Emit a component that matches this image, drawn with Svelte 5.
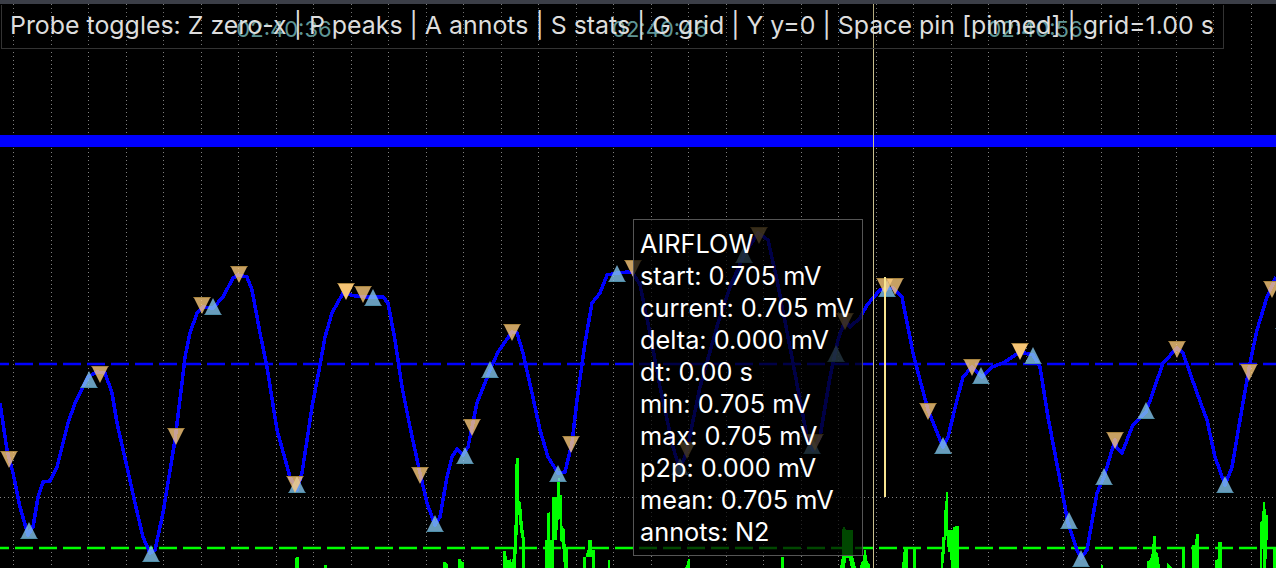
<script>
  const gridX = Array.from({ length: 34 }, (_, i) => Math.round(13 + 37.5 * i) + 0.5);

  const trace = [[0,403],[7,450],[13,473],[20,507],[28,535],[33,527],[38,497],[43,482],[50,481],[57,467],[62,447],[68,423],[75,403],[88,377],[97,372],[105,373],[112,393],[117,423],[127,467],[135,503],[143,537],[150,553],[155,550],[163,513],[175,440],[182,383],[185,357],[190,333],[197,313],[203,307],[213,308],[223,297],[233,278],[238,275],[247,277],[252,290],[260,333],[267,367],[277,430],[290,477],[297,490],[302,473],[312,407],[320,365],[325,337],[332,313],[343,293],[355,296],[367,297],[383,297],[388,303],[395,340],[402,387],[410,427],[420,473],[427,503],[435,525],[440,517],[447,477],[452,457],[457,449],[463,455],[468,447],[477,403],[490,370],[498,352],[512,332],[517,333],[523,353],[532,393],[540,430],[548,457],[558,473],[565,472],[572,443],[577,400],[585,343],[592,303],[600,293],[607,275],[617,273],[628,272],[633,273],[640,285],[650,333],[660,387],[673,447],[680,470],[687,450],[700,387],[718,323],[730,287],[745,253],[758,233],[768,240],[777,280],[793,363],[807,437],[813,450],[820,437],[830,377],[838,340],[845,320],[850,327],[860,318],[867,305],[880,290],[893,288],[902,297],[913,353],[920,380],[928,410],[943,447],[948,437],[957,400],[963,377],[972,367],[982,377],[992,367],[1003,363],[1020,352],[1033,355],[1040,367],[1048,417],[1060,480],[1068,523],[1077,550],[1081,558],[1087,550],[1097,493],[1104,477],[1115,440],[1117,448],[1122,453],[1127,440],[1133,425],[1146,412],[1153,392],[1163,363],[1177,348],[1183,353],[1197,393],[1207,420],[1215,457],[1225,485],[1232,467],[1240,420],[1250,363],[1257,330],[1267,297],[1276,277]];

  const green = [
    [[295,568],[295,560],[296,557],[299,557],[299,568]],
    [[324,568],[324,565],[327,565],[327,568]],
    [[443,568],[443,562],[445,562],[448,565],[448,568]],
    [[458,568],[458,559],[461,559],[462,562],[464,562],[464,568]],
    [[503,568],[503,551],[506,551],[507,560],[509,560],[511,559],[511,563],[513,558],[514,537],[515,513],[515,470],[516,458],[519,458],[519,500],[521,503],[523,527],[525,540],[525,568],[522,568],[522,540],[520,530],[518,510],[518,530],[517,540],[516,568]],
    [[545,568],[545,540],[547,540],[547,513],[550,512],[550,540],[552,540],[552,497],[557,497],[557,487],[558,478],[560,478],[560,495],[562,495],[562,525],[565,530],[565,543],[568,550],[568,568],[564,568],[562,543],[560,540],[560,518],[558,520],[557,540],[554,540],[554,568]],
    [[583,568],[583,557],[586,557],[587,550],[588,549],[588,540],[592,540],[592,550],[595,550],[595,568],[592,568],[592,557],[586,557],[586,568]],
    [[608,568],[608,560],[610,560],[610,568]],
    [[685,568],[687,564],[688,559],[690,559],[690,568]],
    [[781,568],[781,557],[784,557],[784,568]],
    [[840,568],[842,556],[842,530],[844,526],[846,530],[853,530],[853,556],[856,568],[851,568],[849,558],[846,558],[845,568]],
    [[860,568],[861,562],[863,560],[864,550],[866,550],[867,560],[870,565],[870,568]],
    [[902,568],[903,557],[904,547],[916,547],[916,568],[913,568],[913,549],[908,549],[908,568]],
    [[941,568],[942,537],[944,537],[944,510],[945,510],[946,492],[948,492],[948,530],[953,530],[953,527],[955,527],[955,526],[959,526],[959,568],[951,568],[950,552],[948,552],[946,530],[945,550],[943,568]],
    [[1101,568],[1101,565],[1103,565],[1103,568]],
    [[1147,568],[1147,561],[1150,560],[1152,552],[1153,536],[1156,536],[1156,552],[1158,553],[1160,568]],
    [[1167,568],[1167,563],[1170,565],[1172,568]],
    [[1182,568],[1182,547],[1185,547],[1185,568]],
    [[1192,568],[1192,545],[1195,545],[1196,534],[1199,534],[1199,568]],
    [[1215,568],[1215,560],[1218,559],[1218,542],[1222,542],[1222,568]],
    [[1260,568],[1260,522],[1262,520],[1263,502],[1265,502],[1266,515],[1268,515],[1268,530],[1267,550],[1266,568],[1263,568],[1263,530],[1262,568]],
    [[1273,568],[1273,549],[1276,549],[1276,568]]
  ];

  const ups = [[29,539],[89,388],[151,562],[213,315],[297,493],[373,306],[435,532],[465,464],[490,378],[558,482],[617,282],[744,263],[680,475],[812,454],[836,362],[887,297],[943,454],[981,384],[1033,364],[1069,529],[1081,567],[1104,485],[1146,419],[1225,493],[1284,329]];
  const downs = [[9,451,0],[100,366,0],[176,428,0],[202,297,0],[239,266,0],[295,476,0],[346,283,1],[363,286,0],[420,467,0],[472,419,0],[512,324,0],[571,436,0],[633,260,0],[759,227,0],[687,442,0],[815,434,0],[845,313,0],[885,278,0],[895,278,0],[928,403,0],[972,359,0],[1020,343,1],[1115,432,0],[1177,341,0],[1249,364,0],[1272,281,0]];

  const pts = (list) => list.map((p) => p.join(',')).join(' ');
  const upTri = ([x, y]) => `${x - 8.5},${y} ${x + 8.5},${y} ${x},${y - 17}`;
  const downTri = ([x, y]) => `${x - 8.5},${y} ${x + 8.5},${y} ${x},${y + 17}`;

  const times = [[284, '02:40:36'], [660, '02:40:46'], [1035, '02:40:56']];
  const probe = ['AIRFLOW', 'start: 0.705 mV', 'current: 0.705 mV', 'delta: 0.000 mV', 'dt: 0.00 s', 'min: 0.705 mV', 'max: 0.705 mV', 'p2p: 0.000 mV', 'mean: 0.705 mV', 'annots: N2'];
</script>

<div class="page">
  <div class="topbar"></div>
  <div class="plot">
    <svg viewBox="0 4 1276 564" width="1276" height="564">
      {#each gridX as x}
        <line class="grid" x1={x} y1="4" x2={x} y2="568" />
      {/each}
      <line class="grid" x1="0" y1="497.5" x2="1276" y2="497.5" />
      {#each times as [x, label]}
        <text class="time" x={x} y="37" text-anchor="middle">{label}</text>
      {/each}
      <rect class="band" x="0" y="135" width="1276" height="12" />
      <line class="zero blue" x1="0" y1="364" x2="1276" y2="364" />
      <line class="zero lime" x1="0" y1="548" x2="1276" y2="548" />
      {#each green as g}
        <polygon class="eeg" points={pts(g)} />
      {/each}
      <polyline class="trace" points={pts(trace)} />
      {#each ups as u}
        <polygon class="up" points={upTri(u)} />
        <line class="up-edge" x1={u[0] - 8.5} y1={u[1] - 0.5} x2={u[0] + 8.5} y2={u[1] - 0.5} />
      {/each}
      {#each downs as d}
        <polygon class="down" class:bright={d[2]} points={downTri(d)} />
        <line class="down-edge" x1={d[0] - 8.5} y1={d[1] + 0.5} x2={d[0] + 8.5} y2={d[1] + 0.5} />
      {/each}
      <line class="cursor" x1="873.5" y1="4" x2="873.5" y2="568" />
      <line class="pin" x1="885" y1="277" x2="885" y2="497" />
    </svg>
    <div class="toggles">Probe toggles: Z zero-x | P peaks | A annots | S stats | G grid | Y y=0 | Space pin [pinned] | grid=1.00 s</div>
    <div class="probe">
      {#each probe as line}
        <div>{line}</div>
      {/each}
    </div>
  </div>
</div>

<style>
  :global(body) {
    margin: 0;
    background: #000;
  }
  .page {
    width: 1276px;
    height: 568px;
    display: flex;
    flex-direction: column;
    overflow: hidden;
    background: #000;
    font-family: Inter, "Liberation Sans", sans-serif;
  }
  .topbar {
    height: 4px;
    flex: none;
    background: #3b3e47;
  }
  .plot {
    position: relative;
    flex: 1;
  }
  svg {
    display: block;
  }
  .grid {
    stroke: #808080;
    stroke-width: 1;
    stroke-dasharray: 1 3;
    shape-rendering: crispEdges;
  }
  .time {
    font-family: Inter, "Liberation Sans", sans-serif;
    font-size: 22px;
    fill: #6aa8a8;
  }
  .band {
    fill: #0000ff;
  }
  .zero {
    stroke-width: 2.4;
    stroke-dasharray: 18 6;
    stroke-dashoffset: 9;
  }
  .blue {
    stroke: #0000ff;
  }
  .lime {
    stroke: #00ff00;
  }
  .eeg {
    fill: #00ff00;
    shape-rendering: crispEdges;
  }
  .trace {
    fill: none;
    stroke: #0000ff;
    stroke-width: 3.5;
    stroke-linejoin: round;
    shape-rendering: crispEdges;
  }
  .up {
    fill: rgba(130, 195, 235, 0.8);
  }
  .up-edge {
    stroke: #4f8fa8;
    stroke-width: 1;
  }
  .down {
    fill: rgba(255, 205, 125, 0.78);
  }
  .down.bright {
    fill: #f5c475;
  }
  .down-edge {
    stroke: #a8843f;
    stroke-width: 1;
  }
  .cursor {
    stroke: #c9bf8e;
    stroke-width: 1;
  }
  .pin {
    stroke: #f7e48f;
    stroke-width: 2;
  }
  .toggles {
    position: absolute;
    left: 1px;
    top: 1px;
    width: 1223px;
    height: 44px;
    box-sizing: border-box;
    padding-left: 8px;
    border: 1px solid #333;
    border-top: 0;
    background: rgba(0, 0, 0, 0.1);
    color: #ddd;
    font-size: 24.9px;
    line-height: 40px;
    white-space: nowrap;
  }
  .probe {
    position: absolute;
    left: 633px;
    top: 215px;
    width: 230px;
    height: 337px;
    box-sizing: border-box;
    padding: 8px 6px;
    border: 1px solid #555;
    background: rgba(0, 0, 0, 0.72);
    color: #fff;
    font-size: 25.3px;
    line-height: 32px;
    white-space: nowrap;
  }
</style>
